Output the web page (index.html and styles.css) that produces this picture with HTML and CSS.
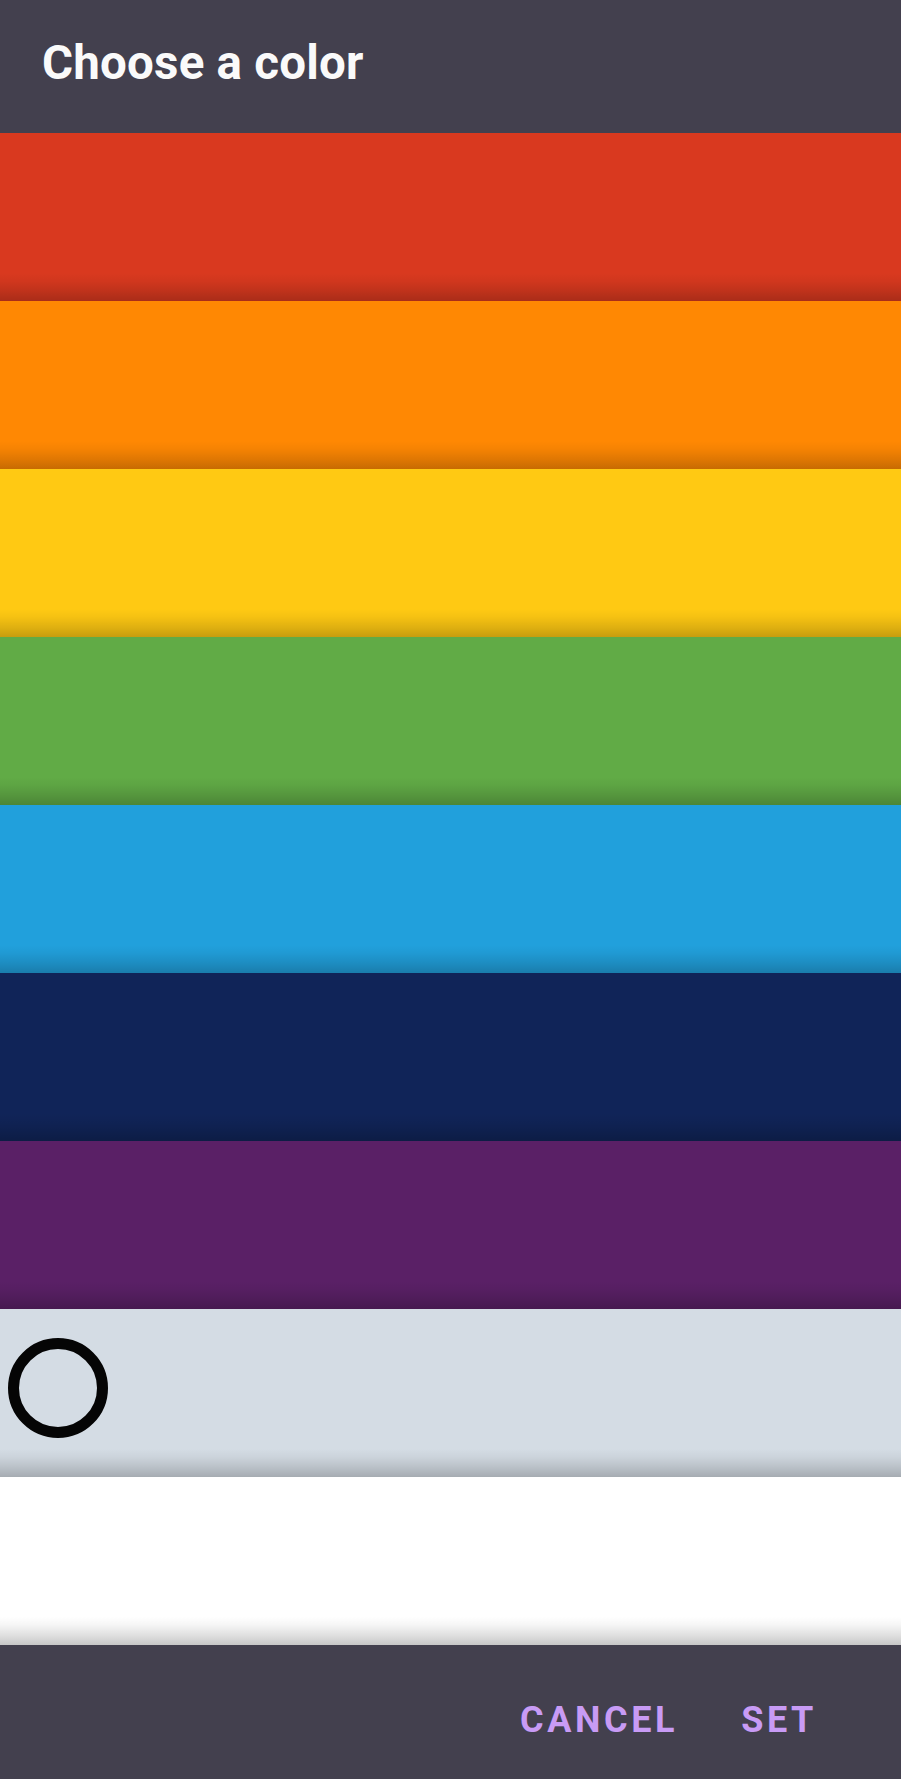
FILE: index.html
```html
<!DOCTYPE html>
<html>
    <head>
        <title>Choose a color</title>
        <meta name="viewport" content="width=device-width, initial-scale=1">
        <link rel="stylesheet" href="styles.css">
    </head>
    <body>
        <div id="dialog">
            <div id="heading">
                <h1>Choose a color</h1>
            </div>
            <div id="swatches">
                <div class="swatch" id="red"></div>
                <div class="swatch" id="orange"></div>
                <div class="swatch" id="yellow"></div>
                <div class="swatch" id="green"></div>
                <div class="swatch" id="blue"></div>
                <div class="swatch" id="navy"></div>
                <div class="swatch" id="purple"></div>
                <div class="swatch selected" id="grey">
                    <span class="marker"></span>
                </div>
                <div class="swatch" id="white"></div>
            </div>
            <div id="actions">
                <span class="button">CANCEL</span>
                <span class="button">SET</span>
            </div>
        </div>
    </body>
</html>
```

FILE: styles.css
```css
* {
    font-family: Roboto, "Liberation Sans", Arial, sans-serif;
    box-sizing: border-box;
}

html, body {
    margin: 0;
    padding: 0;
    background: #43404e;
}

#dialog {
    width: 901px;
    height: 1779px;
    display: flex;
    flex-direction: column;
}

#heading {
    height: 133px;
    background: #43404e;
    padding-left: 42px;
    display: flex;
    align-items: center;
    padding-bottom: 8px;
}

#heading h1 {
    margin: 0;
    color: #fafafa;
    font-size: 47.5px;
    font-weight: 700;
    letter-spacing: 0.2px;
}

#swatches {
    display: flex;
    flex-direction: column;
}

.swatch {
    height: 168px;
    display: flex;
    align-items: center;
    padding-left: 8px;
    padding-bottom: 10px;
    background-image: linear-gradient(to bottom,
        rgba(0, 0, 0, 0) calc(100% - 28px),
        rgba(0, 0, 0, 0.04) calc(100% - 20px),
        rgba(0, 0, 0, 0.12) calc(100% - 10px),
        rgba(0, 0, 0, 0.2) calc(100% - 2px),
        rgba(0, 0, 0, 0.22) 100%);
}

#red { background-color: #d9391f; }
#orange { background-color: #ff8803; }
#yellow { background-color: #ffc913; }
#green { background-color: #61ab46; }
#blue { background-color: #21a0dc; }
#navy { background-color: #102458; }
#purple { background-color: #5a2066; }
#grey { background-color: #d4dce4; }
#white { background-color: #ffffff; }

.marker {
    display: block;
    width: 100px;
    height: 100px;
    border: 11px solid #050505;
    border-radius: 50%;
}

#actions {
    flex: 1;
    background: #43404e;
    display: flex;
    justify-content: flex-end;
    align-items: center;
    gap: 63px;
    padding-right: 84px;
    padding-top: 16px;
}

.button {
    color: #c89bf5;
    font-size: 36px;
    font-weight: 700;
    letter-spacing: 3.6px;
    cursor: pointer;
}
```
